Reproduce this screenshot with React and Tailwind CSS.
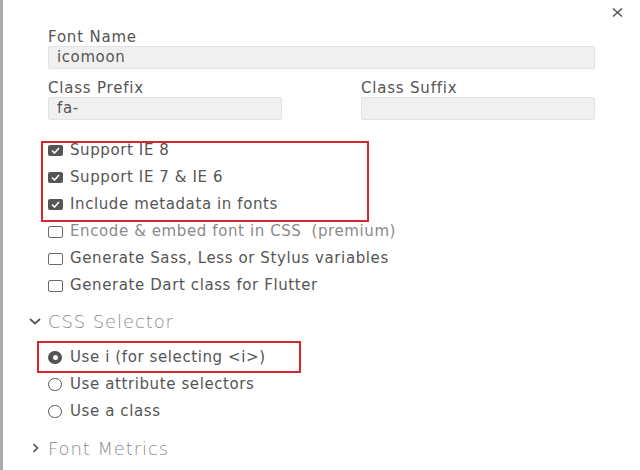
import { useState } from "react";

function CheckBox({ checked }) {
    return checked ? (
        <span className="flex items-center justify-center w-[15px] h-[11px] rounded-[2px] bg-[#555]">
            <svg width="9" height="7" viewBox="0 0 9 7" fill="none">
                <path d="M1 3.5 L3.5 6 L8 1" stroke="#fff" strokeWidth="1.6" />
            </svg>
        </span>
    ) : (
        <span className="block w-[15px] h-[12px] rounded-[2px] border-[1.5px] border-[#6a6a6a] bg-white" />
    );
}

function Radio({ checked }) {
    return checked ? (
        <span className="flex items-center justify-center w-[14px] h-[13px] rounded-full bg-[#555]">
            <span className="block w-[5px] h-[5px] rounded-full bg-white" />
        </span>
    ) : (
        <span className="block w-[14px] h-[13px] rounded-full border-[1.5px] border-[#555] bg-white" />
    );
}

function Chevron({ open }) {
    return (
        <span className="flex items-center justify-center w-[26px]">
            {open ? (
                <svg width="12" height="7" viewBox="0 0 12 7" fill="none">
                    <path d="M1 1 L6 5.5 L11 1" stroke="#555" strokeWidth="1.7" />
                </svg>
            ) : (
                <svg width="7" height="10" viewBox="0 0 7 10" fill="none">
                    <path d="M1.5 1 L5.5 5 L1.5 9" stroke="#555" strokeWidth="1.7" />
                </svg>
            )}
        </span>
    );
}

export default function App() {
    const [opts] = useState([
        { label: "Support IE 8", checked: true },
        { label: "Support IE 7 & IE 6", checked: true },
        { label: "Include metadata in fonts", checked: true },
        { label: "Encode & embed font in CSS", checked: false, premium: true },
        { label: "Generate Sass, Less or Stylus variables", checked: false },
        { label: "Generate Dart class for Flutter", checked: false },
    ]);

    const selectors = [
        { label: "Use i (for selecting <i>)", checked: true },
        { label: "Use attribute selectors", checked: false },
        { label: "Use a class", checked: false },
    ];

    return (
        <div className="relative w-[640px] h-[470px] overflow-hidden bg-white border-l-[3px] border-[#ababab] font-['DejaVu_Sans',sans-serif] text-[#555] tracking-[0.6px] pl-[45px] pr-[45px] pt-[28px]">
            {/* close */}
            <div className="absolute right-[16px] top-[6px] flex items-center justify-center w-[14px] h-[12px]">
                <svg width="11" height="9" viewBox="0 0 11 9" fill="none">
                    <path d="M1 0.5 L10 8.5 M10 0.5 L1 8.5" stroke="#555" strokeWidth="1.5" />
                </svg>
            </div>

            {/* font name */}
            <div className="text-[15px] leading-[18px] tracking-[0.8px]">Font Name</div>
            <div className="h-[23px] border border-[#e3e3e3] bg-[#f0f0f0] rounded-[2px] px-[8px] text-[15px] leading-[21px]">
                icomoon
            </div>

            {/* prefix / suffix */}
            <div className="flex justify-between mt-[10px]">
                <div className="w-[234px]">
                    <div className="text-[15px] leading-[18px] tracking-[0.8px]">Class Prefix</div>
                    <div className="h-[23px] border border-[#e3e3e3] bg-[#f0f0f0] rounded-[2px] px-[8px] text-[15px] leading-[21px]">
                        fa-
                    </div>
                </div>
                <div className="w-[234px]">
                    <div className="text-[15px] leading-[18px] tracking-[0.8px]">Class Suffix</div>
                    <div className="h-[23px] border border-[#e3e3e3] bg-[#f0f0f0] rounded-[2px]" />
                </div>
            </div>

            {/* options */}
            <div className="mt-[17px]">
                {opts.map((o) => (
                    <div key={o.label} className="flex items-center gap-[7px] h-[27px] text-[15px]">
                        <CheckBox checked={o.checked} />
                        <span className={o.premium ? "text-[#8a8a8a]" : ""}>
                            {o.label}
                            {o.premium && <span className="ml-[10px]">(premium)</span>}
                        </span>
                    </div>
                ))}
            </div>

            {/* css selector */}
            <div className="flex items-center h-[24px] mt-[10px] -ml-[26px] text-[18px] font-light tracking-[0.9px] text-[#8a8a8a]">
                <Chevron open />
                <span>CSS Selector</span>
            </div>
            <div className="mt-[11px]">
                {selectors.map((s) => (
                    <div key={s.label} className="flex items-center gap-[8px] h-[27px] text-[15px]">
                        <Radio checked={s.checked} />
                        <span>{s.label}</span>
                    </div>
                ))}
            </div>

            <div className="flex items-center h-[24px] mt-[11px] -ml-[26px] text-[18px] font-light tracking-[0.9px] text-[#8a8a8a]">
                <Chevron />
                <span>Font Metrics</span>
            </div>

            {/* annotation boxes */}
            <div className="absolute left-[38px] top-[141px] w-[328px] h-[81px] border-2 border-[#d8262c]" />
            <div className="absolute left-[34px] top-[341px] w-[264px] h-[32px] border-2 border-[#d8262c]" />
        </div>
    );
}
